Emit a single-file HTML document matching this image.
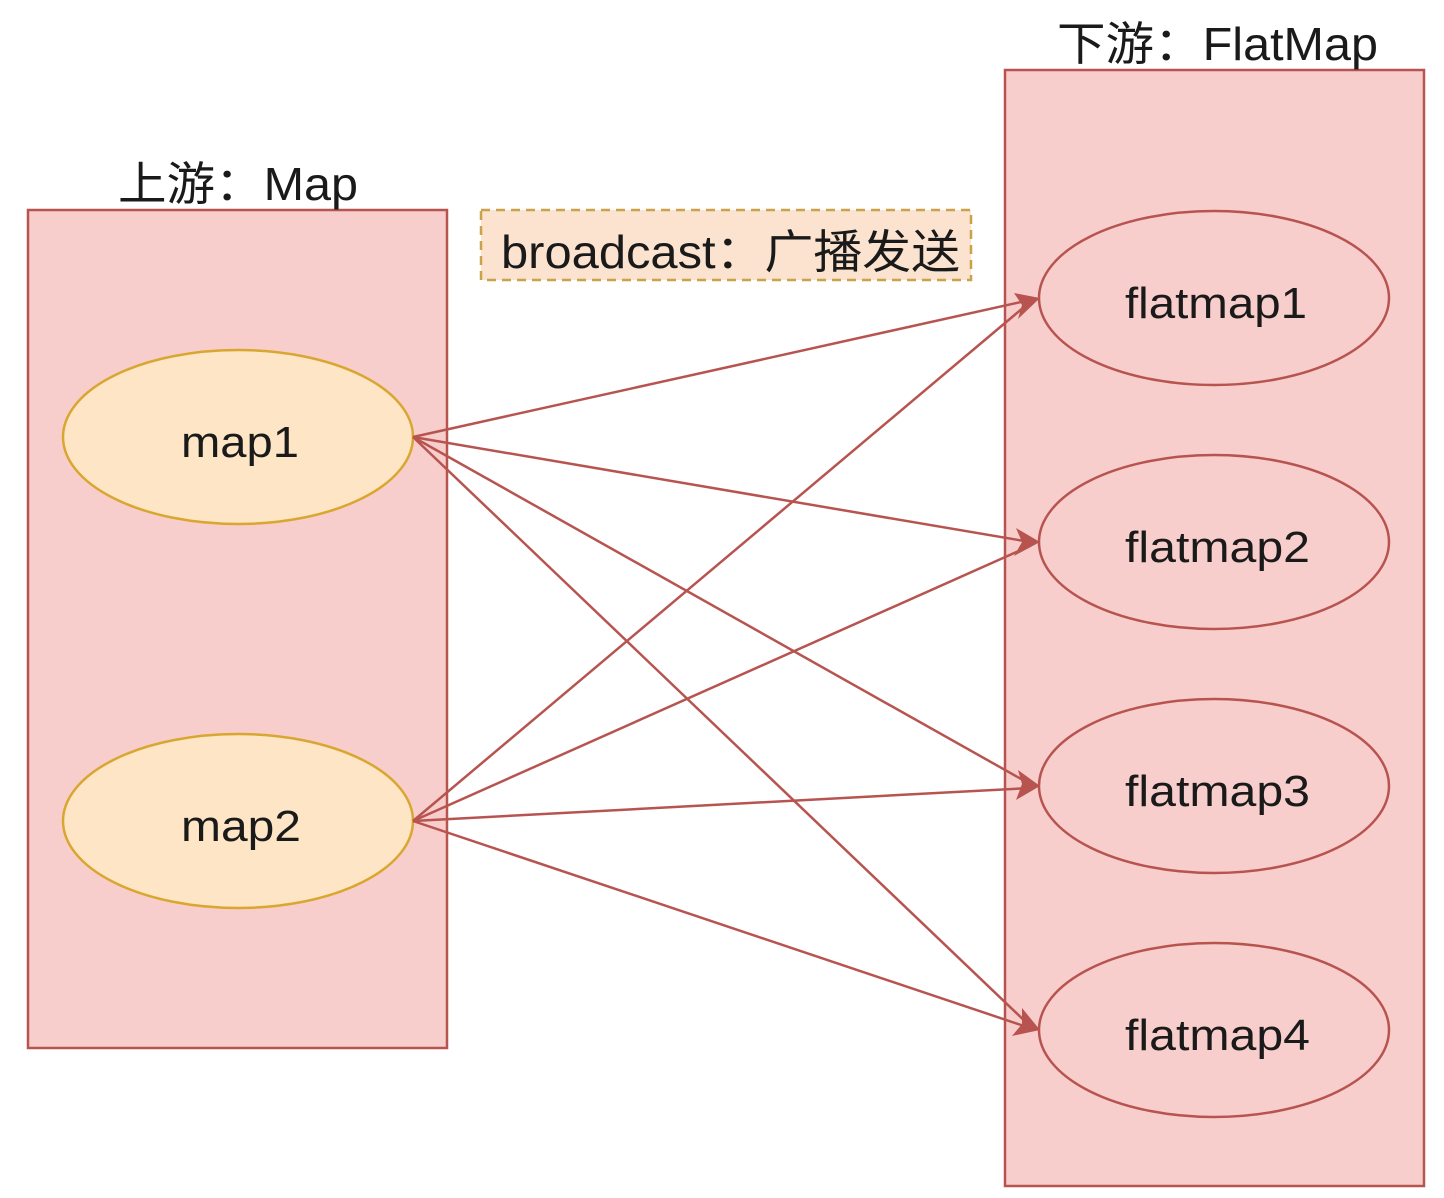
<!DOCTYPE html>
<html><head><meta charset="utf-8"><style>
html,body{margin:0;padding:0;background:#fff;}
svg{display:block;}
text{font-family:"Liberation Sans","Noto Sans CJK SC",sans-serif;fill:#1a1a1a;}
</style></head><body>
<svg width="1444" height="1198" viewBox="0 0 1444 1198" xmlns="http://www.w3.org/2000/svg">
<rect x="28" y="210" width="419" height="838" fill="#f8cecc" stroke="#b85450" stroke-width="2.5"/>
<rect x="1005" y="70" width="419" height="1116" fill="#f8cecc" stroke="#b85450" stroke-width="2.5"/>
<text x="118" y="200" font-size="46" textLength="240" lengthAdjust="spacingAndGlyphs">上游：Map</text>
<text x="1057" y="60" font-size="46" textLength="321" lengthAdjust="spacingAndGlyphs">下游：FlatMap</text>
<rect x="481" y="210" width="490" height="70" fill="#fbe3cf" stroke="#c9a24a" stroke-width="2.5" stroke-dasharray="9,6"/>
<text x="501" y="268" font-size="46" textLength="459" lengthAdjust="spacingAndGlyphs">broadcast：广播发送</text>
<ellipse cx="238" cy="437" rx="175" ry="87" fill="#fde5c5" stroke="#d9a630" stroke-width="2.5"/>
<ellipse cx="238" cy="821" rx="175" ry="87" fill="#fde5c5" stroke="#d9a630" stroke-width="2.5"/>
<text x="181" y="457" font-size="44" textLength="118" lengthAdjust="spacingAndGlyphs">map1</text>
<text x="181" y="841" font-size="44" textLength="120" lengthAdjust="spacingAndGlyphs">map2</text>
<g fill="#f8cecc" stroke="#b85450" stroke-width="2.5">
<ellipse cx="1214" cy="298" rx="175" ry="87"/>
<ellipse cx="1214" cy="542" rx="175" ry="87"/>
<ellipse cx="1214" cy="786" rx="175" ry="87"/>
<ellipse cx="1214" cy="1030" rx="175" ry="87"/>
</g>
<g font-size="44">
<text x="1125" y="318" textLength="182" lengthAdjust="spacingAndGlyphs">flatmap1</text>
<text x="1125" y="562" textLength="185" lengthAdjust="spacingAndGlyphs">flatmap2</text>
<text x="1125" y="806" textLength="185" lengthAdjust="spacingAndGlyphs">flatmap3</text>
<text x="1125" y="1050" textLength="185" lengthAdjust="spacingAndGlyphs">flatmap4</text>
</g>
<g stroke="#b85450" stroke-width="2.5" fill="none">
<line x1="413" y1="437" x2="1030" y2="300"/>
<line x1="413" y1="437" x2="1030" y2="542"/>
<line x1="413" y1="437" x2="1030" y2="784"/>
<line x1="413" y1="437" x2="1030" y2="1026"/>
<line x1="413" y1="821" x2="1030" y2="302"/>
<line x1="413" y1="821" x2="1030" y2="546"/>
<line x1="413" y1="821" x2="1030" y2="788"/>
<line x1="413" y1="821" x2="1030" y2="1028"/>
</g>
<g fill="#b85450">
<polygon points="1040,298 1014,293 1022,305 1018,319"/>
<polygon points="1040,542 1016,528 1022,542 1014,556"/>
<polygon points="1040,786 1018,770 1022,784 1016,800"/>
<polygon points="1040,1030 1022,1008 1022,1024 1012,1036"/>
</g>
</svg>
</body></html>
